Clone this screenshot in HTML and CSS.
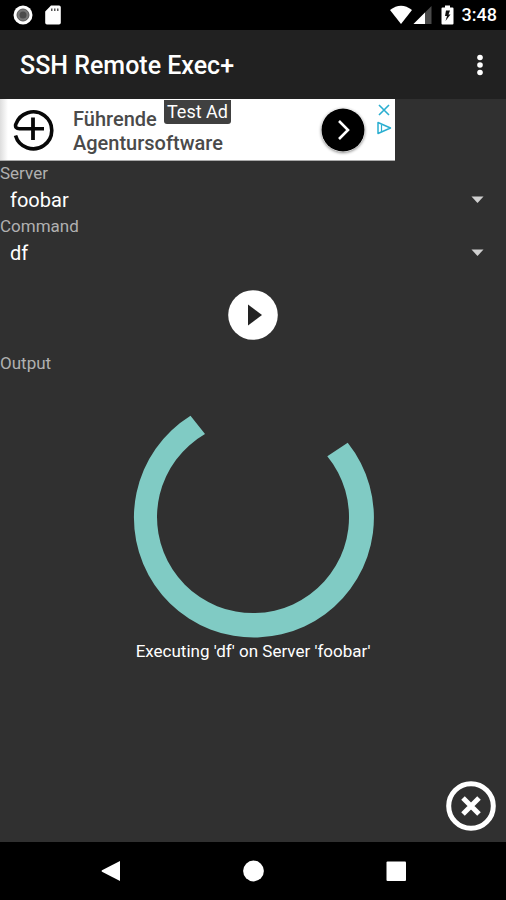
FILE: index.html
```html
<!DOCTYPE html>
<html lang="en">
<head>
<meta charset="utf-8">
<meta name="viewport" content="width=device-width, initial-scale=1">
<title>SSH Remote Exec+</title>
<link rel="stylesheet" href="styles.css">
</head>
<body>
<div class="status">
  <svg width="20" height="20" viewBox="0 0 20 20" aria-hidden="true"><circle cx="10" cy="10" r="9.5" fill="#fff"/><circle cx="10" cy="10" r="6" fill="#777"/><circle cx="10" cy="10" r="3.5" fill="#4c4c4c"/><circle cx="10" cy="10" r="6" fill="none" stroke="#555" stroke-width="1"/></svg>
  <svg class="sd" width="16" height="20" viewBox="0 0 16 20" aria-hidden="true"><path d="M6 .5h8a1.8 1.8 0 0 1 1.8 1.8v15.4a1.8 1.8 0 0 1-1.8 1.8H2a1.8 1.8 0 0 1-1.8-1.8V6.5z" fill="#fff"/><path d="M6 3.5h1.5V6H6zM9 3.5h1.5V6H9zM12 3.5h1.5V6H12z" fill="#555"/></svg>
  <div class="signals">
    <svg width="24" height="20" viewBox="0 0 24 20" aria-hidden="true"><path d="M1 5Q12-3.500 23 5L12 19z" fill="#fff"/></svg>
    <svg width="19" height="20" viewBox="0 0 19 20" aria-hidden="true"><path d="M18.5 1v18H.5z" fill="#4a4a4a"/><path d="M12 7.5V19H.5z" fill="#fff"/></svg>
    <svg class="battery" width="13" height="20" viewBox="0 0 13 20" aria-hidden="true"><path d="M4 .5h5v2h2.500q1 0 1 1v15q0 1-1 1h-10q-1 0-1-1v-15q0-1 1-1H4z" fill="#fff"/><path d="M9 5.500H5L4 11h2l-1.500 5L9.500 9.500H7.500z" fill="#111"/></svg>
    <span class="clock">3:48</span>
  </div>
</div>
<header class="appbar">
  <h1>SSH Remote Exec+</h1>
  <button class="more" type="button" aria-label="More options"><svg width="8" height="24" viewBox="0 0 8 24"><g fill="#fff"><circle cx="4" cy="4.500" r="2.800"/><circle cx="4" cy="12" r="2.800"/><circle cx="4" cy="19.500" r="2.800"/></g></svg></button>
</header>
<main>
  <aside class="ad">
    <svg class="logo" width="42" height="42" viewBox="0 0 42 42" aria-hidden="true"><path d="M31 19.700H6.500Q1.800 19.700 2.700 15.500A18.500 18.500 0 1 1 2.500 26.500" fill="none" stroke="#080808" stroke-width="3.600"/><path d="M20 8.500v22.500" stroke="#080808" stroke-width="3.800"/></svg>
    <p class="adtext">Führende<br>Agentursoftware</p>
    <a class="go" href="#ad" aria-label="Open ad"><svg width="44" height="44" viewBox="0 0 44 44"><circle cx="22" cy="22" r="21.500" fill="#000"/><path d="M18 13l9 9-9 9" fill="none" stroke="#fff" stroke-width="2.600"/></svg></a>
    <div class="adtools">
      <button type="button" aria-label="Close ad"><svg width="14" height="14" viewBox="0 0 14 14"><path d="M2 2l10 10M12 2L2 12" stroke="#2aaed0" stroke-width="1.600"/></svg></button>
      <button type="button" aria-label="About this ad"><svg width="16" height="16" viewBox="0 0 16 16"><path d="M2 2.500v11L14.500 8z" fill="none" stroke="#2aaed0" stroke-width="1.500" stroke-linejoin="round"/><path d="M5.500 5v7" stroke="#2aaed0" stroke-width="1.200"/></svg></button>
    </div>
    <span class="badge">Test Ad</span>
  </aside>
  <div class="field">
    <label for="server">Server</label>
    <div class="pick"><select id="server"><option>foobar</option></select><svg class="arrow" width="13" height="8" viewBox="0 0 13 8" aria-hidden="true"><path d="M.500.500h12L6.500 7z" fill="#d0d0d0"/></svg></div>
  </div>
  <div class="field">
    <label for="command">Command</label>
    <div class="pick"><select id="command"><option>df</option></select><svg class="arrow" width="13" height="8" viewBox="0 0 13 8" aria-hidden="true"><path d="M.500.500h12L6.500 7z" fill="#d0d0d0"/></svg></div>
  </div>
  <button class="play" type="button" aria-label="Execute"><svg width="50" height="50" viewBox="0 0 50 50"><circle cx="25" cy="25" r="24.800" fill="#fff"/><path d="M20 14.500v21L34 25z" fill="#222"/></svg></button>
  <h2>Output</h2>
  <div class="progress" role="status">
    <svg width="242" height="240" viewBox="0 0 242 240" aria-hidden="true"><path d="M58.500 17.700A120 120 0 1 0 215.700 44.700L195.300 58.300A96 96 0 1 1 73 36z" fill="#80cbc4"/></svg>
    <p>Executing 'df' on Server 'foobar'</p>
  </div>
  <button class="cancel" type="button" aria-label="Cancel"><svg width="50" height="50" viewBox="0 0 50 50"><circle cx="25" cy="25" r="22.300" fill="none" stroke="#fff" stroke-width="5"/><path d="M17 17l16 16M33 17l-16 16" stroke="#fff" stroke-width="5"/></svg></button>
</main>
<nav class="nav">
  <button type="button" aria-label="Back"><svg width="22" height="22" viewBox="0 0 22 22"><path d="M21 1v20L3 11.700q-1-.700 0-1.400z" fill="#fff"/></svg></button>
  <button type="button" aria-label="Home"><svg width="22" height="22" viewBox="0 0 22 22"><circle cx="11.500" cy="11" r="10.400" fill="#fff"/></svg></button>
  <button type="button" aria-label="Recent apps"><svg width="22" height="22" viewBox="0 0 22 22"><rect x="1.500" y="1.500" width="19.500" height="19.500" rx="1" fill="#fff"/></svg></button>
</nav>
</body>
</html>
```

FILE: styles.css
```css
* { box-sizing: border-box; }

body {
  margin: 0;
  min-height: 100vh;
  display: flex;
  flex-direction: column;
  background: #303030;
  color: #fff;
  font-family: Roboto, "Liberation Sans", sans-serif;
}

h1, h2, p { margin: 0; }
svg { display: block; }

button {
  display: flex;
  padding: 0;
  border: 0;
  background: none;
  cursor: pointer;
}

.status {
  display: flex;
  align-items: center;
  height: 30px;
  padding: 0 9px 0 13px;
  background: #000;
}
.sd { margin-left: 12px; }
.signals {
  display: flex;
  align-items: center;
  margin-left: auto;
}
.battery { margin: 0 8px 0 9px; }
.clock {
  font-size: 18px;
  font-weight: 500;
  line-height: 20px;
}

.appbar {
  display: flex;
  align-items: center;
  justify-content: space-between;
  height: 69px;
  padding: 2px 22px 0 20px;
  background: #212121;
}
.appbar h1 {
  font-size: 25px;
  font-weight: 500;
  line-height: 32px;
}
.more { margin-bottom: 2px; }

main {
  flex: 1;
  display: flex;
  flex-direction: column;
}

.ad {
  position: relative;
  display: flex;
  align-items: center;
  width: 78%;
  height: 62px;
  padding: 0 3px 0 13px;
  border-bottom: 1px solid #aaa;
  background: linear-gradient(to right, #ddd, #fff 8px);
}
.adtext {
  margin-left: 18px;
  padding-top: 3px;
  color: #4a4a4a;
  font-size: 20px;
  font-weight: 500;
  line-height: 24px;
}
.go {
  margin-left: auto;
  border-radius: 50%;
  box-shadow: 0 1px 3px #888;
}
.adtools {
  display: flex;
  flex-direction: column;
  align-items: center;
  align-self: flex-start;
  gap: 3px;
  margin-left: 11px;
  padding-top: 4px;
}
.badge {
  position: absolute;
  top: 1px;
  left: 164px;
  padding: 1px 3px;
  border-radius: 0 0 3px 3px;
  background: #404040;
  font-size: 18px;
  line-height: 22px;
}

label, h2 {
  display: block;
  color: #b0b0b0;
  font-size: 17px;
  font-weight: 400;
  line-height: 24px;
}
.pick { position: relative; }
select {
  display: block;
  width: 100%;
  height: 29px;
  padding: 0 40px 0 10px;
  border: 0;
  appearance: none;
  background: none;
  color: #fff;
  font-family: inherit;
  font-size: 20px;
}
.arrow {
  position: absolute;
  top: 11px;
  right: 22px;
  pointer-events: none;
}

.play {
  align-self: center;
  margin: 23px 0 11px;
}

.progress {
  display: flex;
  flex-direction: column;
  align-items: center;
  padding-top: 23px;
}
.progress p {
  font-size: 17px;
  line-height: 26px;
}

.cancel {
  align-self: flex-end;
  margin: auto 10px 11px;
}

.nav {
  display: flex;
  align-items: center;
  justify-content: center;
  gap: 24%;
  height: 58px;
  background: #000;
}
```
